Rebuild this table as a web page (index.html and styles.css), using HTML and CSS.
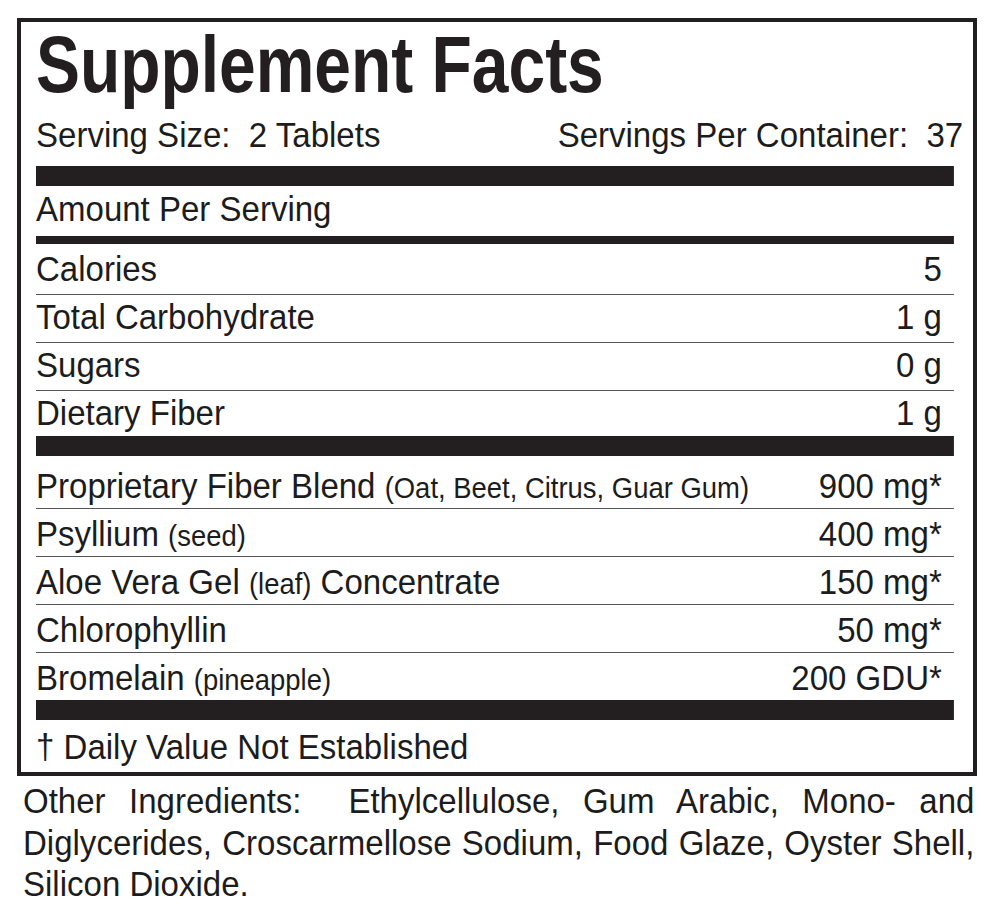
FILE: index.html
```html
<!DOCTYPE html>
<html lang="en">
<head>
<meta charset="utf-8">
<title>Supplement Facts</title>
<link rel="stylesheet" href="styles.css">
</head>
<body>
<section class="label">
  <div class="sheet">
    <h1 class="title">Supplement Facts</h1>
    <div class="serving">
      <span>Serving Size:&nbsp; 2 Tablets</span>
      <span>Servings Per Container:&nbsp; 37</span>
    </div>
    <div class="bar bar-thick"></div>
    <div class="amount">Amount Per Serving</div>
    <div class="bar bar-thin"></div>
    <ul class="group nutrients">
      <li class="row"><span>Calories</span><span>5</span></li>
      <li class="row"><span>Total Carbohydrate</span><span>1 g</span></li>
      <li class="row"><span>Sugars</span><span>0 g</span></li>
      <li class="row"><span>Dietary Fiber</span><span>1 g</span></li>
    </ul>
    <div class="bar bar-thick"></div>
    <ul class="group ingredients">
      <li class="row"><span>Proprietary Fiber Blend <small>(Oat, Beet, Citrus, Guar Gum)</small></span><span>900 mg*</span></li>
      <li class="row"><span>Psyllium <small>(seed)</small></span><span>400 mg*</span></li>
      <li class="row"><span>Aloe Vera Gel <small>(leaf)</small> Concentrate</span><span>150 mg*</span></li>
      <li class="row"><span>Chlorophyllin</span><span>50 mg*</span></li>
      <li class="row"><span>Bromelain <small>(pineapple)</small></span><span>200 GDU*</span></li>
    </ul>
    <div class="bar bar-thick"></div>
    <p class="footnote">† Daily Value Not Established</p>
  </div>
</section>
<p class="other">Other Ingredients:&nbsp; Ethylcellulose, Gum Arabic, Mono- and Diglycerides, Croscarmellose Sodium, Food Glaze, Oyster Shell, Silicon Dioxide.</p>
</body>
</html>
```
FILE: styles.css
```css
html {
  overflow-x: hidden;
}

html, body {
  margin: 0;
  padding: 0;
  background: #ffffff;
}

body {
  color: #1c1c1c;
  font-family: "Liberation Sans", Arial, sans-serif;
  font-size: 35.5px;
  line-height: 37px;
}

.label {
  box-sizing: border-box;
  width: 960px;
  margin: 18px 0 0 17px;
  border: 4px solid #231f20;
  padding: 0 19px 0 15px;
}

/* the label type is a condensed grotesque: squeeze horizontally */
.sheet {
  width: 987px;
  transform: scaleX(0.93);
  transform-origin: left top;
}

.title {
  margin: 0;
  font-size: 80px;
  font-weight: 700;
  line-height: 85px;
  color: #231f20;
  transform: scaleX(0.886);
  transform-origin: left center;
  white-space: nowrap;
}

.serving {
  display: flex;
  justify-content: space-between;
  margin-right: -10px;
  padding: 10px 0 12px;
}

.bar {
  background: #231f20;
}

.bar-thick {
  height: 20px;
}

.bar-thin {
  height: 8px;
}

.amount {
  padding: 5px 0 8px;
}

.group {
  list-style: none;
  margin: 0;
  padding: 0;
}

.row {
  display: flex;
  justify-content: space-between;
  align-items: baseline;
  height: 37px;
  padding-right: 13px;
  border-bottom: 1px solid #555555;
}

.row:last-child {
  border-bottom: none;
}

.nutrients .row {
  padding-top: 4px;
  padding-bottom: 6px;
}

.nutrients .row:first-child {
  padding-top: 7px;
}

.nutrients .row:last-child {
  padding-bottom: 4px;
}

.ingredients .row {
  padding-top: 7px;
  padding-bottom: 3px;
}

.ingredients .row:first-child {
  padding-top: 12px;
}

.row small {
  font-size: 29.5px;
  line-height: 1;
}

.footnote {
  margin: 0;
  padding: 9px 0 6px;
}

.other {
  width: 1023px;
  margin: 5px 0 0 23px;
  text-align: justify;
  line-height: 41.5px;
  transform: scaleX(0.93);
  transform-origin: left top;
}
```
